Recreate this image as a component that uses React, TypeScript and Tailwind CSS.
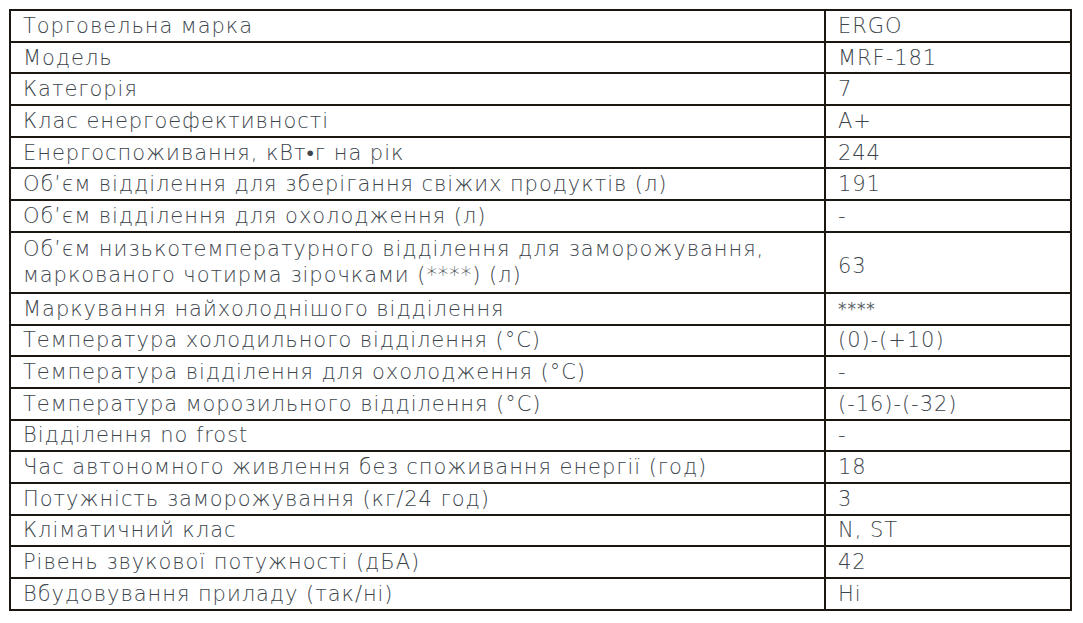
import React from "react";

const rows: [string, string][] = [
  ["Торговельна марка", "ERGO"],
  ["Модель", "MRF-181"],
  ["Категорія", "7"],
  ["Клас енергоефективності", "A+"],
  ["Енергоспоживання, кВт•г на рік", "244"],
  ["Об’єм відділення для зберігання свіжих продуктів (л)", "191"],
  ["Об’єм відділення для охолодження (л)", "-"],
  [
    "Об’єм низькотемпературного відділення для заморожування, маркованого чотирма зірочками (****) (л)",
    "63",
  ],
  ["Маркування найхолоднішого відділення", "****"],
  ["Температура холодильного відділення (°C)", "(0)-(+10)"],
  ["Температура відділення для охолодження (°C)", "-"],
  ["Температура морозильного відділення (°C)", "(-16)-(-32)"],
  ["Відділення no frost", "-"],
  ["Час автономного живлення без споживання енергії (год)", "18"],
  ["Потужність заморожування (кг/24 год)", "3"],
  ["Кліматичний клас", "N, ST"],
  ["Рівень звукової потужності (дБА)", "42"],
  ["Вбудовування приладу (так/ні)", "Hi"],
];

const App: React.FC = () => {
  return (
    <div className="w-[1083px] h-[623px] bg-white pt-[9px] pl-[9px]">
      <table
        className="border-collapse text-[#3c454c] text-[21px] font-extralight leading-[26px] tracking-[0.95px]"
        style={{ fontFamily: '"DejaVu Sans", sans-serif' }}
      >
        <tbody>
          {rows.map(([label, value], i) => {
            const tall = i === 7;
            return (
              <tr key={i} className={tall ? "h-[61px]" : "h-[31.7px]"}>
                <td className="w-[815px] border-2 border-[#1c1611] px-3 py-0 align-middle">
                  {tall ? (
                    <>
                      Об’єм низькотемпературного відділення для заморожування,
                      <br />
                      маркованого чотирма зірочками (****) (л)
                    </>
                  ) : (
                    label
                  )}
                </td>
                <td
                  className={`w-[246px] border-2 border-[#1c1611] px-3 py-0 align-middle ${
                    tall ? "pt-[8px]" : ""
                  } ${value === "****" ? "text-[17px] font-normal text-[#5c646a]" : ""}`}
                >
                  {value}
                </td>
              </tr>
            );
          })}
        </tbody>
      </table>
    </div>
  );
};

export default App;
